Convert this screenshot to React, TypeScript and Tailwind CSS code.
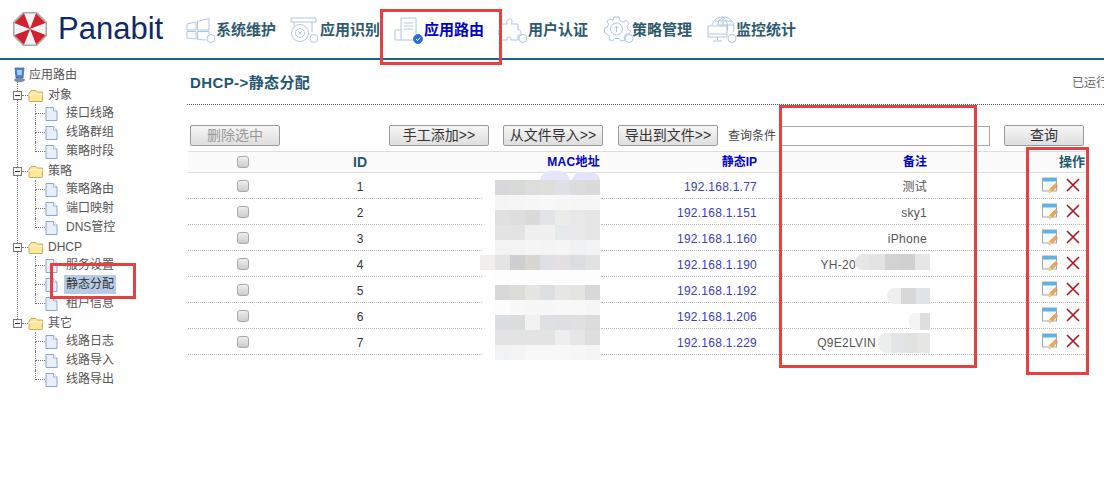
import React from 'react';

const STROKE = '#a6bfe0';

const Badge = ({ fill = 'white' }: { fill?: string }) => (
  <circle cx="25" cy="22.5" r="4" fill={fill} stroke={fill === 'white' ? STROKE : fill} />
);

const SystemIcon = () => (
  <svg viewBox="0 0 30 28" className="w-[30px] h-[28px]" fill="none" stroke={STROKE} strokeWidth="0.9">
    <path d="M1 8 L10 6 V14 H1 Z M1 15.5 H10 V23 L1 22 Z M11.5 5.5 L23 2.5 V14 H11.5 Z M11.5 15.5 H23 V18 M11.5 15.5 V23.5 L20 24" />
    <Badge />
  </svg>
);

const IdentifyIcon = () => (
  <svg viewBox="0 0 30 28" className="w-[30px] h-[28px]" fill="none" stroke={STROKE} strokeWidth="0.9">
    <path d="M2 2 H27 V6 H2 Z M5 6 V10 M23 6 V16" />
    <circle cx="11" cy="17" r="8.5" />
    <circle cx="11" cy="17" r="4.5" />
    <path d="M9.5 15.5 L12.5 18.5 M12.5 15.5 L9.5 18.5" />
    <Badge />
  </svg>
);

const RouteIcon = () => (
  <svg viewBox="0 0 30 28" className="w-[30px] h-[28px]" fill="none" stroke={STROKE} strokeWidth="0.9">
    <path d="M7 14 V2 H22 V18 M10 7 H19 M10 10 H19 M10 13 H19 M7 14 H1 V24 H20 M7 14 V24" />
    <circle cx="24" cy="23" r="4.5" fill="#2d6fd2" stroke="#2d6fd2" />
    <path d="M22 23 L23.5 24.6 L26.2 21.6" stroke="white" strokeWidth="1" />
  </svg>
);

const PuzzleIcon = () => (
  <svg viewBox="0 0 30 28" className="w-[30px] h-[28px]" fill="none" stroke={STROKE} strokeWidth="0.9">
    <path d="M3 8 H9 C7 3 14 1 14 5 C14 7 13 8 13 8 H20 V14 C24 13 24 20 20 19 V24 H13 C14 20 8 20 9 24 H3 V19 C-1 20 -1 13 3 14 Z" />
    <Badge />
  </svg>
);

const GearIcon = () => (
  <svg viewBox="0 0 30 28" className="w-[30px] h-[28px]" fill="none" stroke={STROKE} strokeWidth="0.9">
    <path d="M10 1 H15 L16 4.5 L19 6 L22.5 4.5 L25 7.5 L23 10.5 L24 13.5 L27 15 L25 18 L22 18 L20 21 L21 24 L17 25 L15 22.5 H11 L8.5 25 L5 23.5 L5.5 20 L3 18 L0.5 17 L0.5 12 L3.5 11 L4.5 8 L3 5 L6.5 3 L9 4.5 Z" />
    <circle cx="12.5" cy="13" r="6" />
    <path d="M12.5 16 V10 M10.5 12 L12.5 10 L14.5 12" />
    <Badge />
  </svg>
);

const GlobeIcon = () => (
  <svg viewBox="0 0 30 28" className="w-[30px] h-[28px]" fill="none" stroke={STROKE} strokeWidth="0.9">
    <path d="M5 9 C6 4 11 1 16 1 C22 1 27 5 27 11 C27 13 26.5 15 26 16" />
    <path d="M16 1 C12 4 11 7 11 9 M16 1 C20 4 21 9 20.5 14 M16 1 V9 M8 5 H24 M11 9 H27" />
    <path d="M1 10 H20 V21 H1 Z M1 18 H20 M10.5 21 V24 M6 25 H15" />
    <Badge />
  </svg>
);

const Umbrella = () => (
  <svg viewBox="0 0 36 36" className="w-[36px] h-[36px] shrink-0">
    <path d="M11 1 H25 L35 11 V25 L25 35 H11 L1 25 V11 Z" fill="#a9a9a9" />
    <path d="M18 18 L12 2.5 H24 Z" fill="#f4f4f4" />
    <path d="M18 18 L24 2.5 L33.5 12 Z" fill="#d3202d" />
    <path d="M18 18 L33.5 12 V24 Z" fill="#f4f4f4" />
    <path d="M18 18 L33.5 24 L24 33.5 Z" fill="#d3202d" />
    <path d="M18 18 L24 33.5 H12 Z" fill="#f4f4f4" />
    <path d="M18 18 L12 33.5 L2.5 24 Z" fill="#d3202d" />
    <path d="M18 18 L2.5 24 V12 Z" fill="#f4f4f4" />
    <path d="M18 18 L2.5 12 L12 2.5 Z" fill="#d3202d" />
  </svg>
);

const RootIcon = () => (
  <svg viewBox="0 0 14 16" className="w-[14px] h-[16px]">
    <path d="M3 1 H12 L11 11 H4 Z" fill="#4a86d8" stroke="#2d5fa8" strokeWidth="0.7" />
    <path d="M5 3 H10 L9.6 8 H5.4 Z" fill="#a9ccf2" />
    <ellipse cx="7.5" cy="13" rx="5.5" ry="2.2" fill="#7c8da6" />
  </svg>
);

const FolderIcon = () => (
  <svg viewBox="0 0 16 13" className="w-[16px] h-[13px]">
    <path d="M1 4 L3 1.5 H8 L9.5 3 H14.5 V11.5 Q14.5 12.5 13.5 12.5 H2 Q1 12.5 1 11.5 Z" fill="#ffe79a" stroke="#b99a3c" strokeWidth="0.8" />
    <path d="M1 6 Q6 3.5 15 5.5" fill="none" stroke="#fff6cf" strokeWidth="1.1" />
  </svg>
);

const PageIcon = () => (
  <svg viewBox="0 0 13 14" className="w-[13px] h-[14px]">
    <path d="M1 0.5 H8.5 L12 4 V13.5 H1 Z" fill="#e8effa" stroke="#7f9cc6" strokeWidth="0.9" />
    <path d="M8.5 0.5 V4 H12" fill="#ffffff" stroke="#7f9cc6" strokeWidth="0.7" />
  </svg>
);

const EditIcon = () => (
  <svg viewBox="0 0 16 16" className="w-[16px] h-[16px]">
    <rect x="0.5" y="1" width="14" height="13" fill="#fbfbfb" stroke="#a8a8a8" />
    <rect x="1" y="1" width="13" height="3.5" fill="#5ab4ea" />
    <path d="M7 15.5 L7.8 12 L13.5 6.5 L15.8 8.8 L10 14.6 Z" fill="#eda35c" stroke="#c98a45" strokeWidth="0.5" />
    <path d="M7 15.5 L7.8 12 L10 14.6 Z" fill="#f0dc7a" />
  </svg>
);

const DeleteIcon = () => (
  <svg viewBox="0 0 14 14" className="w-[14px] h-[14px]">
    <path d="M1 1 L13 13 M13 1 L1 13" stroke="#b5121b" strokeWidth="1.6" fill="none" />
  </svg>
);

const navItems = [
  { label: '系统维护', icon: <SystemIcon />, width: 'w-[103px]', textClass: 'text-[#2f5a6e]' },
  { label: '应用识别', icon: <IdentifyIcon />, width: 'w-[105px]', textClass: 'ml-px text-[#2f5a6e]' },
  { label: '应用路由', icon: <RouteIcon />, width: 'w-[104px]', textClass: 'text-[#0000cc]' },
  { label: '用户认证', icon: <PuzzleIcon />, width: 'w-[106px]', textClass: 'text-[#2f5a6e]' },
  { label: '策略管理', icon: <GearIcon />, width: 'w-[103px]', textClass: '-ml-[2px] text-[#2f5a6e]' },
  { label: '监控统计', icon: <GlobeIcon />, width: 'w-[100px]', textClass: '-ml-px text-[#2f5a6e]' },
];

const tree = [
  { name: '对象', items: ['接口线路', '线路群组', '策略时段'] },
  { name: '策略', items: ['策略路由', '端口映射', 'DNS管控'] },
  { name: 'DHCP', items: ['服务设置', '静态分配', '租户信息'] },
  { name: '其它', items: ['线路日志', '线路导入', '线路导出'] },
];

const rows = [
  { id: 1, ip: '192.168.1.77', note: '测试', notePad: 'pr-[2px]' },
  { id: 2, ip: '192.168.1.151', note: 'sky1', notePad: 'pr-[2px]' },
  { id: 3, ip: '192.168.1.160', note: 'iPhone', notePad: 'pr-[2px]' },
  { id: 4, ip: '192.168.1.190', note: 'YH-20', notePad: 'pr-[73px]' },
  { id: 5, ip: '192.168.1.192', note: '', notePad: 'pr-[2px]' },
  { id: 6, ip: '192.168.1.206', note: '', notePad: 'pr-[2px]' },
  { id: 7, ip: '192.168.1.229', note: 'Q9E2LVIN', notePad: 'pr-[53px]' },
];

// mosaic the MAC addresses are hidden behind
const macMosaic = [
  ['#d8d8dc', '#d8dad8', '#dddedb', '#dedfdb', '#dfe0e8', '#dcdcdc', '#dadada'],
  ['#f5f5f5', '#f6f6f6', '#f7f7f7', '#f8f8f8', '#f7f7f7', '#f6f6f6', '#f6f6f6'],
  ['#e0e0e0', '#dedede', '#dadada', '#e2e4e8', '#ebebe8', '#e8e8e8', '#e6e6e6'],
  ['#e3e3e3', '#e3e3e3', '#f0f0f0', '#f0f0f0', '#e6e9e9', '#e8e8e8', '#e6e6e6'],
  ['#f3f3f3', '#f3f3f3', '#f5f5f5', '#f4f4f4', '#f5f5f5', '#eff1f3', '#f3f3f3'],
  ['#e4e4e4', '#cfcfd2', '#d8d6d0', '#dfe0e6', '#e2e0e0', '#dcdde0', '#e2e2e2'],
  ['#fdfdfd', '#fdfdfd', '#fdfdfd', '#fdfdfd', '#fdfdfd', '#fdfdfd', '#fdfdfd'],
  ['#d8d8d8', '#dcdcd9', '#e5e5e2', '#dde0e3', '#e6e6e4', '#e3e5e0', '#d8d8d8'],
  ['#fcfcfc', '#f8f8f8', '#f7f7f7', '#f7f7f7', '#f8f8f8', '#f8f8f8', '#f6f6f6'],
  ['#d9dce0', '#dadcdd', '#f2f2f2', '#dfe0e3', '#dddfe2', '#e0e0e0', '#dcdcdc'],
  ['#e3e3e3', '#e3e3e3', '#e3e3e3', '#e3e3e3', '#eeeeee', '#e6e6e6', '#dedede'],
  ['#f2f3f5', '#f3f4f5', '#f8f8f8', '#f8f8f8', '#f8f8f8', '#f7f7f7', '#f5f5f5'],
];

const Mosaic = ({ colors, className }: { colors: string[]; className: string }) => (
  <div className={`absolute flex overflow-hidden bg-white ${className}`}>
    {colors.map((color, i) => (
      <div key={i} className="flex-1" style={{ backgroundColor: color }} />
    ))}
  </div>
);

const Sidebar = () => (
  <aside className="relative w-[187px] shrink-0 pt-[4px] text-[12px] text-[#555]">
    <div className="absolute left-[17px] top-[20px] h-[243px] border-l border-dotted border-[#777]" />
    <div className="flex h-[22px] items-center pl-[12px]">
      <RootIcon />
      <span className="ml-[3px]">应用路由</span>
    </div>
    <div className="flex flex-col gap-px">
      {tree.map((group) => (
        <div key={group.name}>
          <div className="relative flex h-[18px] items-center pl-[13px]">
            <span className="flex h-[9px] w-[9px] items-center justify-center border border-[#777] bg-white">
              <span className="h-px w-[5px] bg-[#333]" />
            </span>
            <span className="w-[6px] border-t border-dotted border-[#777]" />
            <FolderIcon />
            <span className="ml-[4px]">{group.name}</span>
          </div>
          <ul className="pl-[35px]">
            {group.items.map((item, i) => (
              <li key={item} className="flex h-[19px] items-center">
                <span className="flex h-full w-[10px] flex-col">
                  <span className="h-1/2 border-b border-l border-dotted border-[#777]" />
                  {i < group.items.length - 1 && <span className="h-1/2 border-l border-dotted border-[#777]" />}
                </span>
                <PageIcon />
                <span className={`ml-[6px] px-[2px] leading-[19px] ${item === '静态分配' ? 'bg-[#b8cbe4] text-[#333]' : ''}`}>
                  {item}
                </span>
              </li>
            ))}
          </ul>
        </div>
      ))}
    </div>
  </aside>
);

const ToolButton = ({ label, className, disabled }: { label: string; className: string; disabled?: boolean }) => (
  <button
    className={`h-[21px] rounded-[2px] border border-[#9a9a9a] bg-linear-to-b from-[#f6f6f6] to-[#dedede] text-[14px] leading-[19px] ${
      disabled ? 'text-[#999]' : 'text-[#333]'
    } ${className}`}
  >
    {label}
  </button>
);

const Check = () => (
  <input
    type="checkbox"
    className="ml-[49px] block h-[12px] w-[12px] appearance-none rounded-[3px] border border-[#aaa] bg-linear-to-b from-[#eee] to-[#ccc]"
  />
);

export default function App() {
  return (
    <div className="relative h-[477px] w-[1104px] overflow-hidden bg-white [font-family:'Liberation_Sans','Noto_Sans_CJK_SC',sans-serif]">
      <header className="flex h-[60px] items-center border-b-2 border-[#1a6384] pb-[1px]">
        <div className="flex w-[186px] shrink-0 items-center pl-[12px]">
          <Umbrella />
          <span className="ml-[10px] text-[31px] leading-none text-[#0e2a66]">Panabit</span>
        </div>
        {navItems.map((item) => (
          <div key={item.label} className={`mt-[3px] flex items-center ${item.width}`}>
            {item.icon}
            <span className={`text-[15px] font-bold ${item.textClass}`}>{item.label}</span>
          </div>
        ))}
      </header>

      <div className="flex">
        <Sidebar />
        <main className="w-[917px] shrink-0">
          <div className="flex h-[45px] items-center justify-between border-b border-dotted border-[#555] pl-[3px] pt-[2px]">
            <h1 className="text-[15px] font-bold tracking-[0.4px] text-[#24566e]">DHCP-&gt;静态分配</h1>
            <span className="mr-[-4px] whitespace-nowrap text-[12px] text-[#666]">已运行</span>
          </div>

          <div className="mt-[20px] flex items-center">
            <ToolButton label="删除选中" disabled className="ml-[3px] w-[90px]" />
            <ToolButton label="手工添加>>" className="ml-[109px] w-[100px]" />
            <ToolButton label="从文件导入>>" className="ml-[14px] w-[100px]" />
            <ToolButton label="导出到文件>>" className="ml-[15px] w-[100px]" />
            <span className="ml-[10px] w-[48px] text-[12px] text-[#444]">查询条件</span>
            <input className="ml-[4px] h-[20px] w-[210px] border border-[#aaa] bg-white" />
            <ToolButton label="查询" className="ml-[14px] w-[80px]" />
          </div>

          <table className="ml-px mt-[5px] w-[900px] table-fixed text-[12px]">
            <thead className="leading-[16px]">
              <tr className="h-[21px] border-y border-[#ddd] bg-[#fbfbfb] font-bold">
                <th className="w-[115px] p-0"><Check /></th>
                <th className="w-[114px] p-0 text-center text-[14px] text-[#24566e]">ID</th>
                <th className="w-[185px] p-0 pr-[2px] text-right tracking-[0.3px] text-[#0000cc]">MAC地址</th>
                <th className="w-[157px] p-0 pr-[2px] text-right text-[#0000cc]">静态IP</th>
                <th className="w-[170px] p-0 pr-[2px] text-right text-[#0000cc]">备注</th>
                <th className="w-[159px] p-0 pr-[3px] text-right text-[13px] text-[#24566e]">操作</th>
              </tr>
            </thead>
            <tbody className="leading-[16px]">
              {rows.map((row) => (
                <tr key={row.id} className="h-[26px] border-b border-dotted border-[#bbb]">
                  <td className="p-0"><Check /></td>
                  <td className="p-0 pt-[2px] text-center text-[#333]">{row.id}</td>
                  <td className="p-0" />
                  <td className="p-0 pr-[2px] pt-[2px] text-right tracking-[0.25px] text-[#3c40b4]">{row.ip}</td>
                  <td className={`p-0 pt-[2px] text-right tracking-[0.3px] text-[#555] ${row.notePad}`}>{row.note}</td>
                  <td className="p-0">
                    <div className="flex items-center justify-end gap-[8px] pb-[2px] pr-[8px]">
                      <EditIcon />
                      <DeleteIcon />
                    </div>
                  </td>
                </tr>
              ))}
            </tbody>
          </table>
        </main>
      </div>

      {/* blurred-out data on top of the table */}
      <div className="absolute left-[482px] top-[174px] h-[188px] w-[118px] rounded-[10px] bg-white" />
      <div className="absolute left-[540px] top-[171px] h-[10px] w-[30px] rounded-t-full bg-[#e6e6fa]" />
      <div className="absolute left-[572px] top-[172px] h-[9px] w-[28px] rounded-t-full bg-[#e2e2fa]" />
      <div className="absolute left-[480px] top-[255px] h-[15px] w-[15px] bg-[#f0efec]" />
      <div className="absolute left-[495px] top-[180px] flex w-[105px] flex-col">
        {macMosaic.map((cells, i) => (
          <div key={i} className="flex h-[15px]">
            {cells.map((color, j) => (
              <div key={j} className="flex-1" style={{ backgroundColor: color }} />
            ))}
          </div>
        ))}
      </div>
      <Mosaic
        colors={['#e6e6e6', '#e3e3e3', '#d2d2d2', '#d0d0d0', '#e6e6e6']}
        className="left-[855px] top-[254px] h-[16px] w-[75px] rounded-l-[8px]"
      />
      <Mosaic
        colors={['#efefef', '#d9d8d8', '#e0e4e6']}
        className="left-[887px] top-[288px] h-[16px] w-[43px] rounded-l-[8px]"
      />
      <Mosaic colors={['#f4f4f4', '#dededf']} className="left-[909px] top-[313px] h-[17px] w-[21px] rounded-l-[6px]" />
      <Mosaic
        colors={['#eceded', '#e3e5e6', '#e2e2e0', '#e6e6e4']}
        className="left-[878px] top-[333px] h-[20px] w-[52px] rounded-l-[8px]"
      />

      {/* red marks drawn on the screenshot */}
      <div className="absolute left-[380px] top-[9px] h-[56px] w-[122px] border-[3px] border-[#e84040]" />
      <div className="absolute left-[50px] top-[263px] h-[36px] w-[86px] border-[3px] border-[#e84040]" />
      <div className="absolute left-[779px] top-[105px] h-[263px] w-[198px] border-[3px] border-[#e84040]" />
      <div className="absolute left-[1026px] top-[147px] h-[228px] w-[63px] border-[3px] border-[#e84040]" />
    </div>
  );
}
